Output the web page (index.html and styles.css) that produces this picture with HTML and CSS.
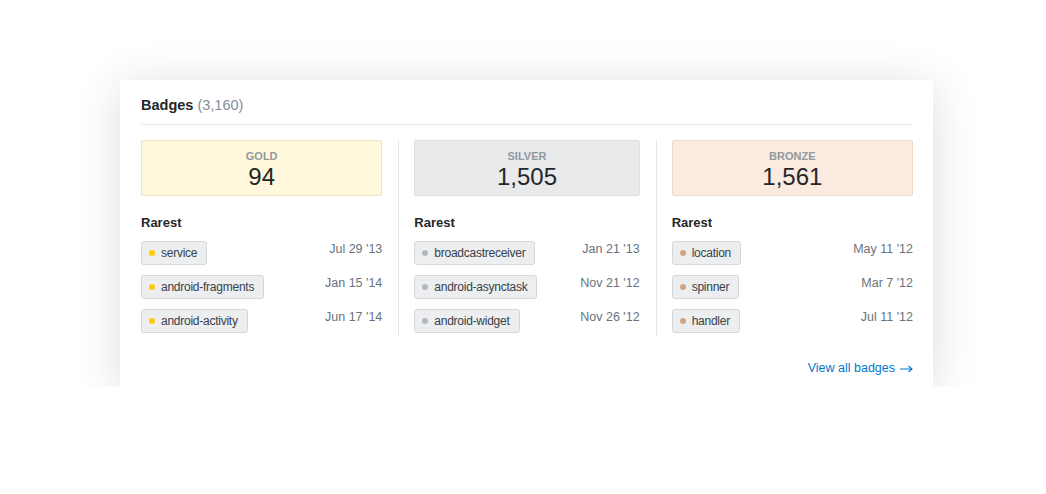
FILE: index.html
```html
<!DOCTYPE html>
<html lang="en">
<head>
    <meta charset="UTF-8">
    <meta name="viewport" content="width=device-width, initial-scale=1.0">
    <title>Badges</title>
    <link rel="stylesheet" href="styles.css">
</head>
<body>
    <div class="card">
        <h2 class="card-title">Badges <span class="count">(3,160)</span></h2>

        <div class="badge-columns">
            <div class="badge-col">
                <div class="badge-box gold">
                    <div class="badge-label">GOLD</div>
                    <div class="badge-num">94</div>
                </div>
                <h3 class="rarest">Rarest</h3>
                <div class="badge-row">
                    <span class="tag"><span class="dot gold-dot"></span>service</span>
                    <span class="date">Jul 29 '13</span>
                </div>
                <div class="badge-row">
                    <span class="tag"><span class="dot gold-dot"></span>android-fragments</span>
                    <span class="date">Jan 15 '14</span>
                </div>
                <div class="badge-row">
                    <span class="tag"><span class="dot gold-dot"></span>android-activity</span>
                    <span class="date">Jun 17 '14</span>
                </div>
            </div>

            <div class="badge-col">
                <div class="badge-box silver">
                    <div class="badge-label">SILVER</div>
                    <div class="badge-num">1,505</div>
                </div>
                <h3 class="rarest">Rarest</h3>
                <div class="badge-row">
                    <span class="tag"><span class="dot silver-dot"></span>broadcastreceiver</span>
                    <span class="date">Jan 21 '13</span>
                </div>
                <div class="badge-row">
                    <span class="tag"><span class="dot silver-dot"></span>android-asynctask</span>
                    <span class="date">Nov 21 '12</span>
                </div>
                <div class="badge-row">
                    <span class="tag"><span class="dot silver-dot"></span>android-widget</span>
                    <span class="date">Nov 26 '12</span>
                </div>
            </div>

            <div class="badge-col">
                <div class="badge-box bronze">
                    <div class="badge-label">BRONZE</div>
                    <div class="badge-num">1,561</div>
                </div>
                <h3 class="rarest">Rarest</h3>
                <div class="badge-row">
                    <span class="tag"><span class="dot bronze-dot"></span>location</span>
                    <span class="date">May 11 '12</span>
                </div>
                <div class="badge-row">
                    <span class="tag"><span class="dot bronze-dot"></span>spinner</span>
                    <span class="date">Mar 7 '12</span>
                </div>
                <div class="badge-row">
                    <span class="tag"><span class="dot bronze-dot"></span>handler</span>
                    <span class="date">Jul 11 '12</span>
                </div>
            </div>
        </div>

        <div class="card-footer">
            <a class="view-all" href="#">View all badges
                <svg class="arrow" width="13" height="8" viewBox="0 0 13 8"><path d="M0 4h12M8.5 1l3.5 3-3.5 3" fill="none" stroke="currentColor" stroke-width="1.1"/></svg>
            </a>
        </div>
    </div>
</body>
</html>
```

FILE: styles.css
```css
* {
    margin: 0;
    padding: 0;
    box-sizing: border-box;
}

body {
    background: #fff;
    font-family: "Liberation Sans", Arial, sans-serif;
    color: #242729;
    padding: 80px 0 0 120px;
}

.card {
    width: 813px;
    height: 307px;
    background: #fff;
    padding: 15px 20px 0 21px;
    box-shadow: 0 6px 44px rgba(0, 0, 0, 0.14);
}

.card-title {
    font-size: 14.5px;
    line-height: 20px;
    font-weight: bold;
    color: #242729;
    padding-bottom: 9px;
    border-bottom: 1px solid #e4e6e8;
}

.count {
    font-weight: normal;
    color: #848d95;
}

.badge-columns {
    display: grid;
    grid-template-columns: repeat(3, 1fr);
    margin-top: 15px;
}

.badge-col {
    padding: 0 16px 3px 15px;
    border-left: 1px solid #e4e6e8;
}

.badge-col:first-child {
    padding-left: 0;
    border-left: none;
}

.badge-col:last-child {
    padding-right: 0;
}

.badge-box {
    height: 56px;
    border: 1px solid;
    border-radius: 2px;
    text-align: center;
    padding-top: 8px;
}

.badge-box.gold {
    background: #fff8dc;
    border-color: #f1e4bc;
}

.badge-box.silver {
    background: #e9eaeb;
    border-color: #dcdee0;
}

.badge-box.bronze {
    background: #fbeadf;
    border-color: #f1d8c6;
}

.badge-label {
    font-size: 11px;
    line-height: 14px;
    font-weight: bold;
    color: #9199a1;
}

.badge-num {
    font-size: 24px;
    line-height: 28px;
    color: #242729;
}

.rarest {
    font-size: 13px;
    line-height: 14px;
    font-weight: bold;
    margin-top: 20px;
    margin-bottom: 11px;
}

.badge-row {
    display: flex;
    justify-content: space-between;
    align-items: flex-start;
    margin-bottom: 10px;
}

.badge-row:last-child {
    margin-bottom: 0;
}

.tag {
    display: inline-flex;
    align-items: center;
    gap: 6px;
    height: 24px;
    padding: 0 9px 0 7px;
    font-size: 12px;
    letter-spacing: -0.25px;
    color: #39414a;
    background: #eceeef;
    border: 1px solid #d6d9dc;
    border-radius: 3px;
}

.dot {
    width: 6px;
    height: 6px;
    border-radius: 50%;
}

.gold-dot {
    background: #ffcc01;
}

.silver-dot {
    background: #b4b8bc;
}

.bronze-dot {
    background: #d1a684;
}

.date {
    font-size: 12.5px;
    line-height: 17px;
    color: #6a737c;
}

.card-footer {
    text-align: right;
    margin-top: 22px;
}

.view-all {
    display: inline-flex;
    align-items: center;
    gap: 5px;
    font-size: 12.5px;
    line-height: 17px;
    color: #0077cc;
    text-decoration: none;
}

.arrow {
    margin-top: 0;
}
```
